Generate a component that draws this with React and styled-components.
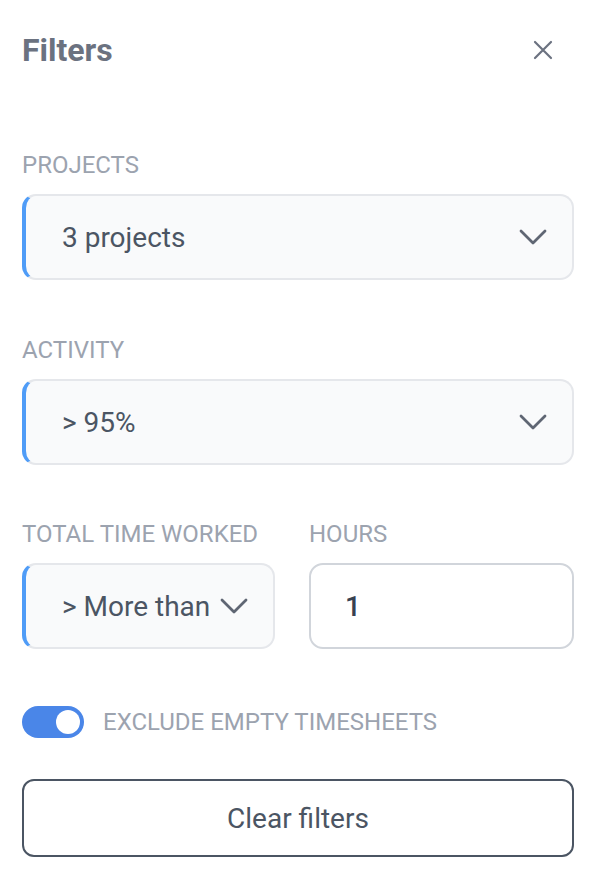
import React from "react";
import styled, { createGlobalStyle } from "styled-components";

const Global = createGlobalStyle`
  body {
    margin: 0;
    background: #ffffff;
    font-family: Roboto, "Liberation Sans", sans-serif;
  }
`;

const Panel = styled.div`
  width: 602px;
  box-sizing: border-box;
  padding: 30px 28px 30px 22px;
`;

const Header = styled.div`
  display: flex;
  align-items: center;
  justify-content: space-between;
  height: 40px;
`;

const Title = styled.h2`
  margin: 0;
  font-size: 32px;
  font-weight: 700;
  color: #6b7280;
`;

const Close = styled.button`
  border: none;
  background: none;
  padding: 0;
  margin-right: 21px;
  display: flex;
  cursor: pointer;
`;

const Field = styled.div`
  margin-top: ${(p) => p.$top || 0}px;
  display: flex;
  flex-direction: column;
  flex: ${(p) => p.$grow || "none"};
  min-width: 0;
`;

const Label = styled.div`
  font-size: 24px;
  color: #9ca3af;
  text-transform: uppercase;
  line-height: 28px;
  margin-bottom: 15px;
  white-space: nowrap;
`;

const Select = styled.div`
  height: 86px;
  box-sizing: border-box;
  display: flex;
  align-items: center;
  justify-content: space-between;
  background: #f9fafb;
  border: 2px solid #e5e7eb;
  border-left: 4px solid #4f9cf7;
  border-radius: 14px;
  padding: 0 25px 0 36px;
  font-size: 28px;
  color: #4b5563;
  white-space: nowrap;
`;

const Input = styled.div`
  height: 86px;
  box-sizing: border-box;
  display: flex;
  align-items: center;
  background: #ffffff;
  border: 2px solid #d1d5db;
  border-radius: 14px;
  padding: 0 34px;
  font-size: 28px;
  font-weight: 500;
  color: #374151;
`;

const Row = styled.div`
  display: flex;
  gap: 34px;
  margin-top: 55px;
`;

const ToggleRow = styled.div`
  display: flex;
  align-items: center;
  gap: 19px;
  margin-top: 57px;
`;

const Track = styled.div`
  width: 62px;
  height: 32px;
  border-radius: 16px;
  background: #4a86e8;
  display: flex;
  align-items: center;
  justify-content: flex-end;
  padding: 0 4px;
  box-sizing: border-box;
`;

const Knob = styled.div`
  width: 24px;
  height: 24px;
  border-radius: 50%;
  background: #ffffff;
`;

const ToggleLabel = styled.span`
  font-size: 24px;
  color: #9ca3af;
  text-transform: uppercase;
  white-space: nowrap;
`;

const ClearButton = styled.button`
  margin-top: 41px;
  width: 100%;
  height: 78px;
  background: #ffffff;
  border: 2px solid #4b5563;
  border-radius: 12px;
  font-family: Roboto, "Liberation Sans", sans-serif;
  font-size: 28px;
  color: #4b5563;
`;

const Chevron = () => (
  <svg width="28" height="16" viewBox="0 0 28 16" fill="none">
    <path d="M2 2l12 12L26 2" stroke="#5f6673" strokeWidth="2.8" strokeLinecap="round" strokeLinejoin="round" />
  </svg>
);

const X = () => (
  <svg width="20" height="20" viewBox="0 0 20 20" fill="none">
    <path d="M2 2l16 16M18 2L2 18" stroke="#6b7280" strokeWidth="2.2" strokeLinecap="round" />
  </svg>
);

export default function App() {
  return (
    <Panel>
      <Global />
      <Header>
        <Title>Filters</Title>
        <Close>
          <X />
        </Close>
      </Header>

      <Field $top={81}>
        <Label>Projects</Label>
        <Select>
          3 projects
          <Chevron />
        </Select>
      </Field>

      <Field $top={56}>
        <Label>Activity</Label>
        <Select>
          &gt; 95%
          <Chevron />
        </Select>
      </Field>

      <Row>
        <Field $grow="0 0 253px">
          <Label>Total time worked</Label>
          <Select>
            &gt; More than
            <Chevron />
          </Select>
        </Field>
        <Field $grow="1">
          <Label>Hours</Label>
          <Input>1</Input>
        </Field>
      </Row>

      <ToggleRow>
        <Track>
          <Knob />
        </Track>
        <ToggleLabel>Exclude empty timesheets</ToggleLabel>
      </ToggleRow>

      <ClearButton>Clear filters</ClearButton>
    </Panel>
  );
}
